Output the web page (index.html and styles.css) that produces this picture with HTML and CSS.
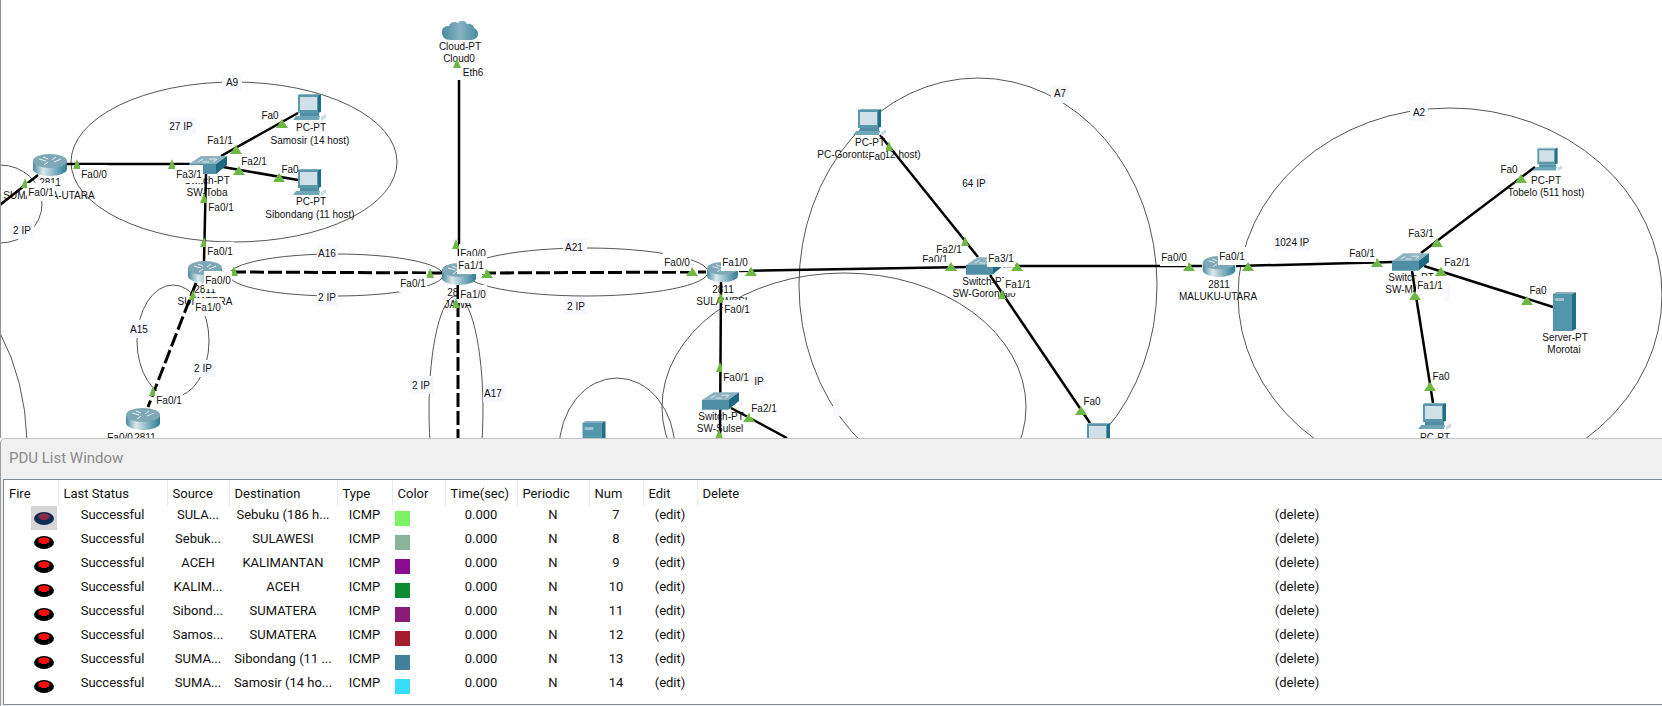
FILE: index.html
```html
<!DOCTYPE html>
<html lang="en">
<head>
    <meta charset="UTF-8">
    <meta name="viewport" content="width=device-width, initial-scale=1.0">
    <title>PDU List Window</title>
    <link rel="stylesheet" href="styles.css">
</head>
<body>
    <div class="canvas">
        <svg class="topology" width="1662" height="438" viewBox="0 0 1662 438">
            <defs>
                <linearGradient id="router-body" x1="0" x2="1" y1="0" y2="0">
                    <stop offset="0" stop-color="#4a8a9f"/>
                    <stop offset="0.3" stop-color="#dbe9ed"/>
                    <stop offset="0.65" stop-color="#7fb0c0"/>
                    <stop offset="1" stop-color="#2f7d94"/>
                </linearGradient>
                <linearGradient id="cloud-body" x1="0" x2="1" y1="0" y2="0">
                    <stop offset="0" stop-color="#4a8a9f"/>
                    <stop offset="0.5" stop-color="#86b3c1"/>
                    <stop offset="1" stop-color="#4a8a9f"/>
                </linearGradient>
                <symbol id="router" viewBox="0 0 34 22" overflow="visible">
                    <path d="M0 7V15A17 7 0 0 0 34 15V7Z" fill="url(#router-body)"/>
                    <ellipse cx="17" cy="7" rx="17" ry="7" fill="#7ea8b6"/>
                    <path d="M6 5L13 7M28 5L21 8M11 11L15 8M23 3L19 6M10 3L15 5" stroke="#e8f1f3" stroke-width="1" fill="none"/>
                </symbol>
                <symbol id="switch" viewBox="0 0 38 18" overflow="visible">
                    <path d="M0 8L12 0H38L27 8Z" fill="#8db3c0"/>
                    <path d="M0 8H27V18H0Z" fill="#4f8fa6"/>
                    <path d="M27 8L38 0V9L27 18Z" fill="#1d6a80"/>
                    <path d="M9 6L14 3M14 6H20M20 3H27M24 6L28 3" stroke="#dfeaee" stroke-width="1" fill="none"/>
                </symbol>
                <symbol id="pc" viewBox="0 0 33 27" overflow="visible">
                    <path d="M5 1H25V19H5Z" fill="#5a97ab"/>
                    <path d="M25 1L28 0V18L25 19Z" fill="#1f6f85"/>
                    <path d="M5 1L7 0H28L25 1Z" fill="#86b0bf"/>
                    <path d="M7 3H24V16H7Z" fill="#cfe0e8"/>
                    <path d="M7 19H26V22H7Z" fill="#4f8fa6"/>
                    <path d="M3 22H27L26 26H0Z" fill="#6fa6b8"/>
                    <path d="M28 23L33 20V24L28 27Z" fill="#c9dce3"/>
                </symbol>
                <symbol id="server" viewBox="0 0 23 39" overflow="visible">
                    <path d="M0 2H19V39H0Z" fill="#5296ac"/>
                    <path d="M19 2L23 0V37L19 39Z" fill="#1f6f85"/>
                    <path d="M0 2L3 0H23L19 2Z" fill="#86b0bf"/>
                    <path d="M2 6H11V9H2Z" fill="#9cc0cc"/>
                </symbol>
                <path id="tri" d="M0 -5L6 4H-6Z"/>
                <path id="tri-s" d="M0 -6L4 4H-4Z"/>
            </defs>

            <!-- area outlines -->
            <g class="areas">
                <ellipse cx="234" cy="162" rx="163" ry="80"/>
                <ellipse cx="336" cy="275" rx="107" ry="21"/>
                <ellipse cx="586" cy="272" rx="122" ry="24"/>
                <ellipse cx="173" cy="341" rx="36" ry="56"/>
                <ellipse cx="456" cy="410" rx="27" ry="114"/>
                <ellipse cx="0" cy="204" rx="42" ry="39"/>
                <path d="M0 333Q25 380 27 440"/>
                <ellipse cx="844" cy="407" rx="182" ry="134"/>
                <ellipse cx="978" cy="285" rx="179" ry="207"/>
                <ellipse cx="1450" cy="295" rx="212" ry="187"/>
                <ellipse cx="617" cy="450" rx="58" ry="72"/>
            </g>

            <!-- device labels -->
            <g class="device-labels">
                <text x="460" y="50">Cloud-PT</text>
                <text x="459" y="62">Cloud0</text>
                <text x="311" y="131">PC-PT</text>
                <text x="310" y="144">Samosir (14 host)</text>
                <text x="311" y="205">PC-PT</text>
                <text x="310" y="218">Sibondang (11 host)</text>
                <text x="207" y="184">Switch-PT</text>
                <text x="207" y="196">SW-Toba</text>
                <text x="50" y="186">2811</text>
                <text x="49" y="199">SUMATERA-UTARA</text>
                <text x="205" y="293">2811</text>
                <text x="205" y="305">SUMATERA</text>
                <text x="458" y="296">2811</text>
                <text x="458" y="308">JAWA</text>
                <text x="723" y="293">2811</text>
                <text x="722" y="305">SULAWESI</text>
                <text x="721" y="420">Switch-PT</text>
                <text x="720" y="432">SW-Sulsel</text>
                <text x="870" y="146">PC-PT</text>
                <text x="869" y="158">PC-Gorontalo (12 host)</text>
                <text x="985" y="285">Switch-PT</text>
                <text x="984" y="297">SW-Gorontalo</text>
                <text x="1219" y="288">2811</text>
                <text x="1218" y="300">MALUKU-UTARA</text>
                <text x="1411" y="281">Switch-PT</text>
                <text x="1411" y="293">SW-Maluku</text>
                <text x="1546" y="184">PC-PT</text>
                <text x="1546" y="196">Tobelo (511 host)</text>
                <text x="1565" y="341">Server-PT</text>
                <text x="1564" y="353">Morotai</text>
                <text x="1435" y="441">PC-PT</text>
                <text x="145" y="441">2811</text>
            </g>

            <!-- links -->
            <g class="links">
                <path d="M459 80V263"/>
                <path d="M38 175L0 205"/>
                <path d="M67 164H190"/>
                <path d="M221 156L298 113"/>
                <path d="M223 167L298 180"/>
                <path d="M206 173L204 262"/>
                <path d="M739 271L967 267"/>
                <path d="M1003 266H1202"/>
                <path d="M1236 266L1393 262"/>
                <path d="M1421 253L1535 167"/>
                <path d="M1424 266L1553 307"/>
                <path d="M1412 271L1433 403"/>
                <path d="M880 135L978 257"/>
                <path d="M990 275L1090 423"/>
                <path d="M721 282L720 438"/>
                <path d="M731 408L787 438"/>
            </g>
            <g class="links dashed">
                <path d="M232 272L443 273"/>
                <path d="M482 273L706 272"/>
                <path d="M196 283L148 407"/>
                <path d="M458 285V438"/>
            </g>

            <!-- devices -->
            <path class="cloud" d="M442 32C442 27 446 26 449 26C450 22 455 21 458 23C460 20 465 20 467 24C470 23 474 25 474 28C477 29 478 32 478 34C478 38 474 40 470 40H450C445 40 442 37 442 32Z"/>
            <use href="#router" x="33" y="154" width="34" height="22"/>
            <use href="#router" x="188" y="261" width="34" height="22"/>
            <use href="#router" x="442" y="263" width="34" height="22"/>
            <use href="#router" x="706" y="262" width="33" height="20"/>
            <use href="#router" x="1202" y="256" width="34" height="21"/>
            <use href="#router" x="126" y="408" width="34" height="22"/>
            <use href="#switch" x="189" y="156" width="38" height="18"/>
            <use href="#switch" x="702" y="392" width="37" height="18"/>
            <use href="#switch" x="966" y="257" width="37" height="18"/>
            <use href="#switch" x="1392" y="253" width="37" height="18"/>
            <use href="#pc" x="293" y="94" width="33" height="27"/>
            <use href="#pc" x="293" y="169" width="33" height="27"/>
            <use href="#pc" x="853" y="109" width="33" height="27"/>
            <use href="#pc" x="1533" y="146" width="29" height="27"/>
            <use href="#pc" x="1418" y="403" width="33" height="27"/>
            <use href="#pc" x="1082" y="423" width="33" height="27"/>
            <use href="#server" x="1553" y="292" width="23" height="39"/>
            <use href="#server" x="582" y="421" width="24" height="39"/>

            <!-- link lights -->
            <g class="lights">
                <use href="#tri-s" x="77" y="165"/>
                <use href="#tri-s" x="172" y="165"/>
                <use href="#tri" x="236" y="150"/>
                <use href="#tri" x="282" y="124"/>
                <use href="#tri" x="239" y="171"/>
                <use href="#tri" x="279" y="178"/>
                <use href="#tri-s" x="204" y="199"/>
                <use href="#tri-s" x="204" y="243"/>
                <use href="#tri-s" x="234" y="272"/>
                <use href="#tri-s" x="430" y="274"/>
                <use href="#tri" x="487" y="274"/>
                <use href="#tri-s" x="456" y="245"/>
                <use href="#tri-s" x="457" y="64"/>
                <use href="#tri-s" x="456" y="304"/>
                <use href="#tri-s" x="193" y="296"/>
                <use href="#tri-s" x="153" y="392"/>
                <use href="#tri-s" x="25" y="184"/>
                <use href="#tri" x="692" y="272"/>
                <use href="#tri" x="751" y="272"/>
                <use href="#tri-s" x="721" y="299"/>
                <use href="#tri-s" x="720" y="368"/>
                <use href="#tri-s" x="719" y="435"/>
                <use href="#tri" x="749" y="418"/>
                <use href="#tri-s" x="889" y="147"/>
                <use href="#tri-s" x="965" y="242"/>
                <use href="#tri" x="951" y="267"/>
                <use href="#tri" x="1017" y="267"/>
                <use href="#tri-s" x="1002" y="295"/>
                <use href="#tri" x="1081" y="411"/>
                <use href="#tri" x="1189" y="267"/>
                <use href="#tri" x="1248" y="267"/>
                <use href="#tri" x="1377" y="263"/>
                <use href="#tri" x="1437" y="243"/>
                <use href="#tri" x="1441" y="272"/>
                <use href="#tri" x="1415" y="296"/>
                <use href="#tri" x="1521" y="179"/>
                <use href="#tri" x="1527" y="301"/>
                <use href="#tri" x="1430" y="387"/>
            </g>

            <!-- port labels, white box hides what is under them -->
            <g class="ports">
                <g class="port" transform="translate(473 72)"><text>Eth6</text></g>
                <g class="port" transform="translate(41 192)"><rect/><text>Fa0/1</text></g>
                <g class="port" transform="translate(94 174)"><rect/><text>Fa0/0</text></g>
                <g class="port" transform="translate(189 174)"><rect/><text>Fa3/1</text></g>
                <g class="port short" transform="translate(270 115)"><text>Fa0</text></g>
                <g class="port" transform="translate(220 140)"><text>Fa1/1</text></g>
                <g class="port" transform="translate(254 161)"><text>Fa2/1</text></g>
                <g class="port short" transform="translate(290 169)"><text>Fa0</text></g>
                <g class="port" transform="translate(221 207)"><rect/><text>Fa0/1</text></g>
                <g class="port" transform="translate(220 251)"><rect/><text>Fa0/1</text></g>
                <g class="port" transform="translate(218 280)"><rect/><text>Fa0/0</text></g>
                <g class="port" transform="translate(413 283)"><rect/><text>Fa0/1</text></g>
                <g class="port" transform="translate(473 253)"><rect/><text>Fa0/0</text></g>
                <g class="port" transform="translate(471 265)"><rect/><text>Fa1/1</text></g>
                <g class="port" transform="translate(473 294)"><rect/><text>Fa1/0</text></g>
                <g class="port" transform="translate(208 307)"><rect/><text>Fa1/0</text></g>
                <g class="port" transform="translate(169 400)"><rect/><text>Fa0/1</text></g>
                <g class="port" transform="translate(120 437)"><text>Fa0/0</text></g>
                <g class="port" transform="translate(677 262)"><rect/><text>Fa0/0</text></g>
                <g class="port" transform="translate(735 262)"><rect/><text>Fa1/0</text></g>
                <g class="port" transform="translate(737 309)"><rect/><text>Fa0/1</text></g>
                <g class="port" transform="translate(736 377)"><rect/><text>Fa0/1</text></g>
                <g class="port" transform="translate(764 408)"><rect/><text>Fa2/1</text></g>
                <g class="port short" transform="translate(877 156)"><rect/><text>Fa0</text></g>
                <g class="port" transform="translate(935 259)"><text>Fa0/1</text></g>
                <rect class="port-cut" x="921" y="262" width="28" height="3"/>
                <g class="port" transform="translate(949 249)"><text>Fa2/1</text></g>
                <g class="port" transform="translate(1001 258)"><rect/><text>Fa3/1</text></g>
                <g class="port" transform="translate(1018 284)"><rect/><text>Fa1/1</text></g>
                <g class="port short" transform="translate(1092 401)"><text>Fa0</text></g>
                <g class="port" transform="translate(1174 257)"><rect/><text>Fa0/0</text></g>
                <g class="port" transform="translate(1232 256)"><rect/><text>Fa0/1</text></g>
                <g class="port" transform="translate(1362 253)"><rect/><text>Fa0/1</text></g>
                <g class="port" transform="translate(1421 233)"><text>Fa3/1</text></g>
                <g class="port" transform="translate(1457 262)"><text>Fa2/1</text></g>
                <g class="port" transform="translate(1430 285)"><rect/><text>Fa1/1</text></g>
                <g class="port short" transform="translate(1509 169)"><text>Fa0</text></g>
                <g class="port short" transform="translate(1538 290)"><text>Fa0</text></g>
                <g class="port short" transform="translate(1441 376)"><text>Fa0</text></g>
            </g>

            <!-- area notes -->
            <g class="notes">
                <rect x="222" y="74" width="20" height="17"/><text x="232" y="86">A9</text>
                <rect x="168" y="117" width="28" height="18"/><text x="181" y="130">27 IP</text>
                <rect x="11" y="222" width="23" height="17"/><text x="22" y="234">2 IP</text>
                <rect x="317" y="244" width="21" height="17"/><text x="327" y="257">A16</text>
                <rect x="317" y="289" width="21" height="17"/><text x="327" y="301">2 IP</text>
                <rect x="128" y="320" width="22" height="18"/><text x="139" y="333">A15</text>
                <rect x="193" y="360" width="22" height="17"/><text x="203" y="372">2 IP</text>
                <rect x="563" y="238" width="24" height="17"/><text x="574" y="251">A21</text>
                <rect x="564" y="297" width="24" height="18"/><text x="576" y="310">2 IP</text>
                <rect x="411" y="376" width="23" height="18"/><text x="421" y="389">2 IP</text>
                <rect x="483" y="384" width="22" height="18"/><text x="493" y="397">A17</text>
                <rect x="1051" y="85" width="18" height="18"/><text x="1060" y="97">A7</text>
                <rect x="961" y="174" width="27" height="18"/><text x="974" y="187">64 IP</text>
                <rect x="753" y="372" width="14" height="18"/><text x="759" y="385">IP</text>
                <rect x="833" y="398" width="7" height="18"/>
                <rect x="1410" y="103" width="18" height="18"/><text x="1419" y="116">A2</text>
                <rect x="1273" y="233" width="38" height="18"/><text x="1292" y="246">1024 IP</text>
                <rect x="1444" y="284" width="6" height="18"/>
            </g>
        </svg>
    </div>

    <section class="pdu-window">
        <h2 class="pdu-title">PDU List Window</h2>
        <div class="pdu-frame">
            <table class="pdu-table">
                <colgroup>
                    <col class="col-fire">
                    <col class="col-status">
                    <col class="col-source">
                    <col class="col-dest">
                    <col class="col-type">
                    <col class="col-color">
                    <col class="col-time">
                    <col class="col-periodic">
                    <col class="col-num">
                    <col class="col-edit">
                    <col class="col-delete">
                </colgroup>
                <thead>
                    <tr>
                        <th>Fire</th>
                        <th>Last Status</th>
                        <th>Source</th>
                        <th>Destination</th>
                        <th>Type</th>
                        <th>Color</th>
                        <th>Time(sec)</th>
                        <th>Periodic</th>
                        <th>Num</th>
                        <th>Edit</th>
                        <th>Delete</th>
                    </tr>
                </thead>
                <tbody>
                    <tr>
                        <td><span class="fire selected"><i></i></span></td>
                        <td>Successful</td><td>SULA...</td><td>Sebuku (186 h...</td><td>ICMP</td>
                        <td><span class="swatch swatch-7"></span></td>
                        <td>0.000</td><td>N</td><td>7</td><td>(edit)</td><td>(delete)</td>
                    </tr>
                    <tr>
                        <td><span class="fire"><i></i></span></td>
                        <td>Successful</td><td>Sebuk...</td><td>SULAWESI</td><td>ICMP</td>
                        <td><span class="swatch swatch-8"></span></td>
                        <td>0.000</td><td>N</td><td>8</td><td>(edit)</td><td>(delete)</td>
                    </tr>
                    <tr>
                        <td><span class="fire"><i></i></span></td>
                        <td>Successful</td><td>ACEH</td><td>KALIMANTAN</td><td>ICMP</td>
                        <td><span class="swatch swatch-9"></span></td>
                        <td>0.000</td><td>N</td><td>9</td><td>(edit)</td><td>(delete)</td>
                    </tr>
                    <tr>
                        <td><span class="fire"><i></i></span></td>
                        <td>Successful</td><td>KALIM...</td><td>ACEH</td><td>ICMP</td>
                        <td><span class="swatch swatch-10"></span></td>
                        <td>0.000</td><td>N</td><td>10</td><td>(edit)</td><td>(delete)</td>
                    </tr>
                    <tr>
                        <td><span class="fire"><i></i></span></td>
                        <td>Successful</td><td>Sibond...</td><td>SUMATERA</td><td>ICMP</td>
                        <td><span class="swatch swatch-11"></span></td>
                        <td>0.000</td><td>N</td><td>11</td><td>(edit)</td><td>(delete)</td>
                    </tr>
                    <tr>
                        <td><span class="fire"><i></i></span></td>
                        <td>Successful</td><td>Samos...</td><td>SUMATERA</td><td>ICMP</td>
                        <td><span class="swatch swatch-12"></span></td>
                        <td>0.000</td><td>N</td><td>12</td><td>(edit)</td><td>(delete)</td>
                    </tr>
                    <tr>
                        <td><span class="fire"><i></i></span></td>
                        <td>Successful</td><td>SUMA...</td><td>Sibondang (11 ...</td><td>ICMP</td>
                        <td><span class="swatch swatch-13"></span></td>
                        <td>0.000</td><td>N</td><td>13</td><td>(edit)</td><td>(delete)</td>
                    </tr>
                    <tr>
                        <td><span class="fire"><i></i></span></td>
                        <td>Successful</td><td>SUMA...</td><td>Samosir (14 ho...</td><td>ICMP</td>
                        <td><span class="swatch swatch-14"></span></td>
                        <td>0.000</td><td>N</td><td>14</td><td>(edit)</td><td>(delete)</td>
                    </tr>
                </tbody>
            </table>
        </div>
    </section>
</body>
</html>
```

FILE: styles.css
```css
/* Basic Resets */
* {
    margin: 0;
    padding: 0;
    box-sizing: border-box;
}

body {
    width: 1662px;
    height: 706px;
    overflow: hidden;
    display: flex;
    flex-direction: column;
    background: #fff;
    font-family: 'Roboto', sans-serif;
    color: #111;
}

/* Topology canvas */
.canvas {
    height: 438px;
    flex: none;
    border-left: 1px solid #8c9097;
    overflow: hidden;
}

.topology {
    display: block;
    margin-left: -1px;
    font-family: 'Liberation Sans', sans-serif;
    font-size: 10px;
    text-anchor: middle;
}

.areas ellipse,
.areas path {
    fill: none;
    stroke: #555;
    stroke-width: 1;
}

.device-labels text,
.notes text,
.port text {
    fill: #111;
}

.links path {
    fill: none;
    stroke: #000;
    stroke-width: 2.5;
}

.links.dashed path {
    stroke-width: 3;
    stroke-dasharray: 14 4;
}

.cloud {
    fill: url(#cloud-body);
}

.lights {
    fill: #6fb744;
}

.port rect {
    x: -14px;
    y: -9px;
    width: 28px;
    height: 18px;
    fill: #fff;
}

.port.short rect {
    x: -9px;
    width: 18px;
}

.port text {
    transform: translateY(4px);
}

.port-cut {
    fill: #fff;
}

.notes rect {
    fill: #f8f8ff;
}

/* PDU list */
.pdu-window {
    flex: 1;
    min-height: 0;
    background: #f0f0f0;
    border-top: 1px solid #c4c4c4;
    border-left: 1px solid #9a9a9a;
    border-top-left-radius: 5px;
    overflow: hidden;
}

.pdu-title {
    height: 40px;
    padding: 11px 0 0 8px;
    font-size: 15px;
    line-height: 16px;
    font-weight: normal;
    color: #8a8a8a;
}

.pdu-frame {
    margin-left: 2px;
    height: 226px;
    background: #fff;
    border-top: 1px solid #7f8a92;
    border-left: 1px solid #7f8a92;
    border-bottom: 1px solid #7f8a92;
    overflow: hidden;
}

.pdu-table {
    width: 1893px;
    table-layout: fixed;
    border-collapse: collapse;
    font-size: 13px;
    line-height: 18px;
}

.col-fire { width: 54px; }
.col-status { width: 109px; }
.col-source { width: 62px; }
.col-dest { width: 108px; }
.col-type { width: 55px; }
.col-color { width: 53px; }
.col-time { width: 72px; }
.col-periodic { width: 72px; }
.col-num { width: 54px; }
.col-edit { width: 54px; }
.col-delete { width: 1200px; }

.pdu-table th {
    height: 26px;
    padding: 2px 5px 0;
    text-align: left;
    font-weight: normal;
    border-right: 1px solid #ececec;
    white-space: nowrap;
}

.pdu-table td {
    height: 24px;
    vertical-align: top;
    text-align: center;
    white-space: nowrap;
    overflow: hidden;
}

.fire {
    display: flex;
    width: 26px;
    height: 24px;
    margin-left: 27px;
    align-items: center;
    justify-content: center;
}

.fire i {
    display: block;
    width: 20px;
    height: 13px;
    border-radius: 50%;
    background: radial-gradient(ellipse 6px 3.5px at 50% 36%, #ff0c0c 0 85%, #000 100%);
}

.fire.selected {
    background: #d6d6d6;
}

.fire.selected i {
    background: radial-gradient(ellipse 6px 3.5px at 50% 36%, #8b2a4c 0 85%, #0e2d50 100%);
}

.swatch {
    display: block;
    width: 15px;
    height: 15px;
    margin: 5px 0 0 3px;
}

.swatch-7 { background: #7cf265; }
.swatch-8 { background: #8ab59b; }
.swatch-9 { background: #8c0b93; }
.swatch-10 { background: #0c8b32; }
.swatch-11 { background: #8c1a78; }
.swatch-12 { background: #a61c2f; }
.swatch-13 { background: #427f9b; }
.swatch-14 { background: #38ddfb; }
```
